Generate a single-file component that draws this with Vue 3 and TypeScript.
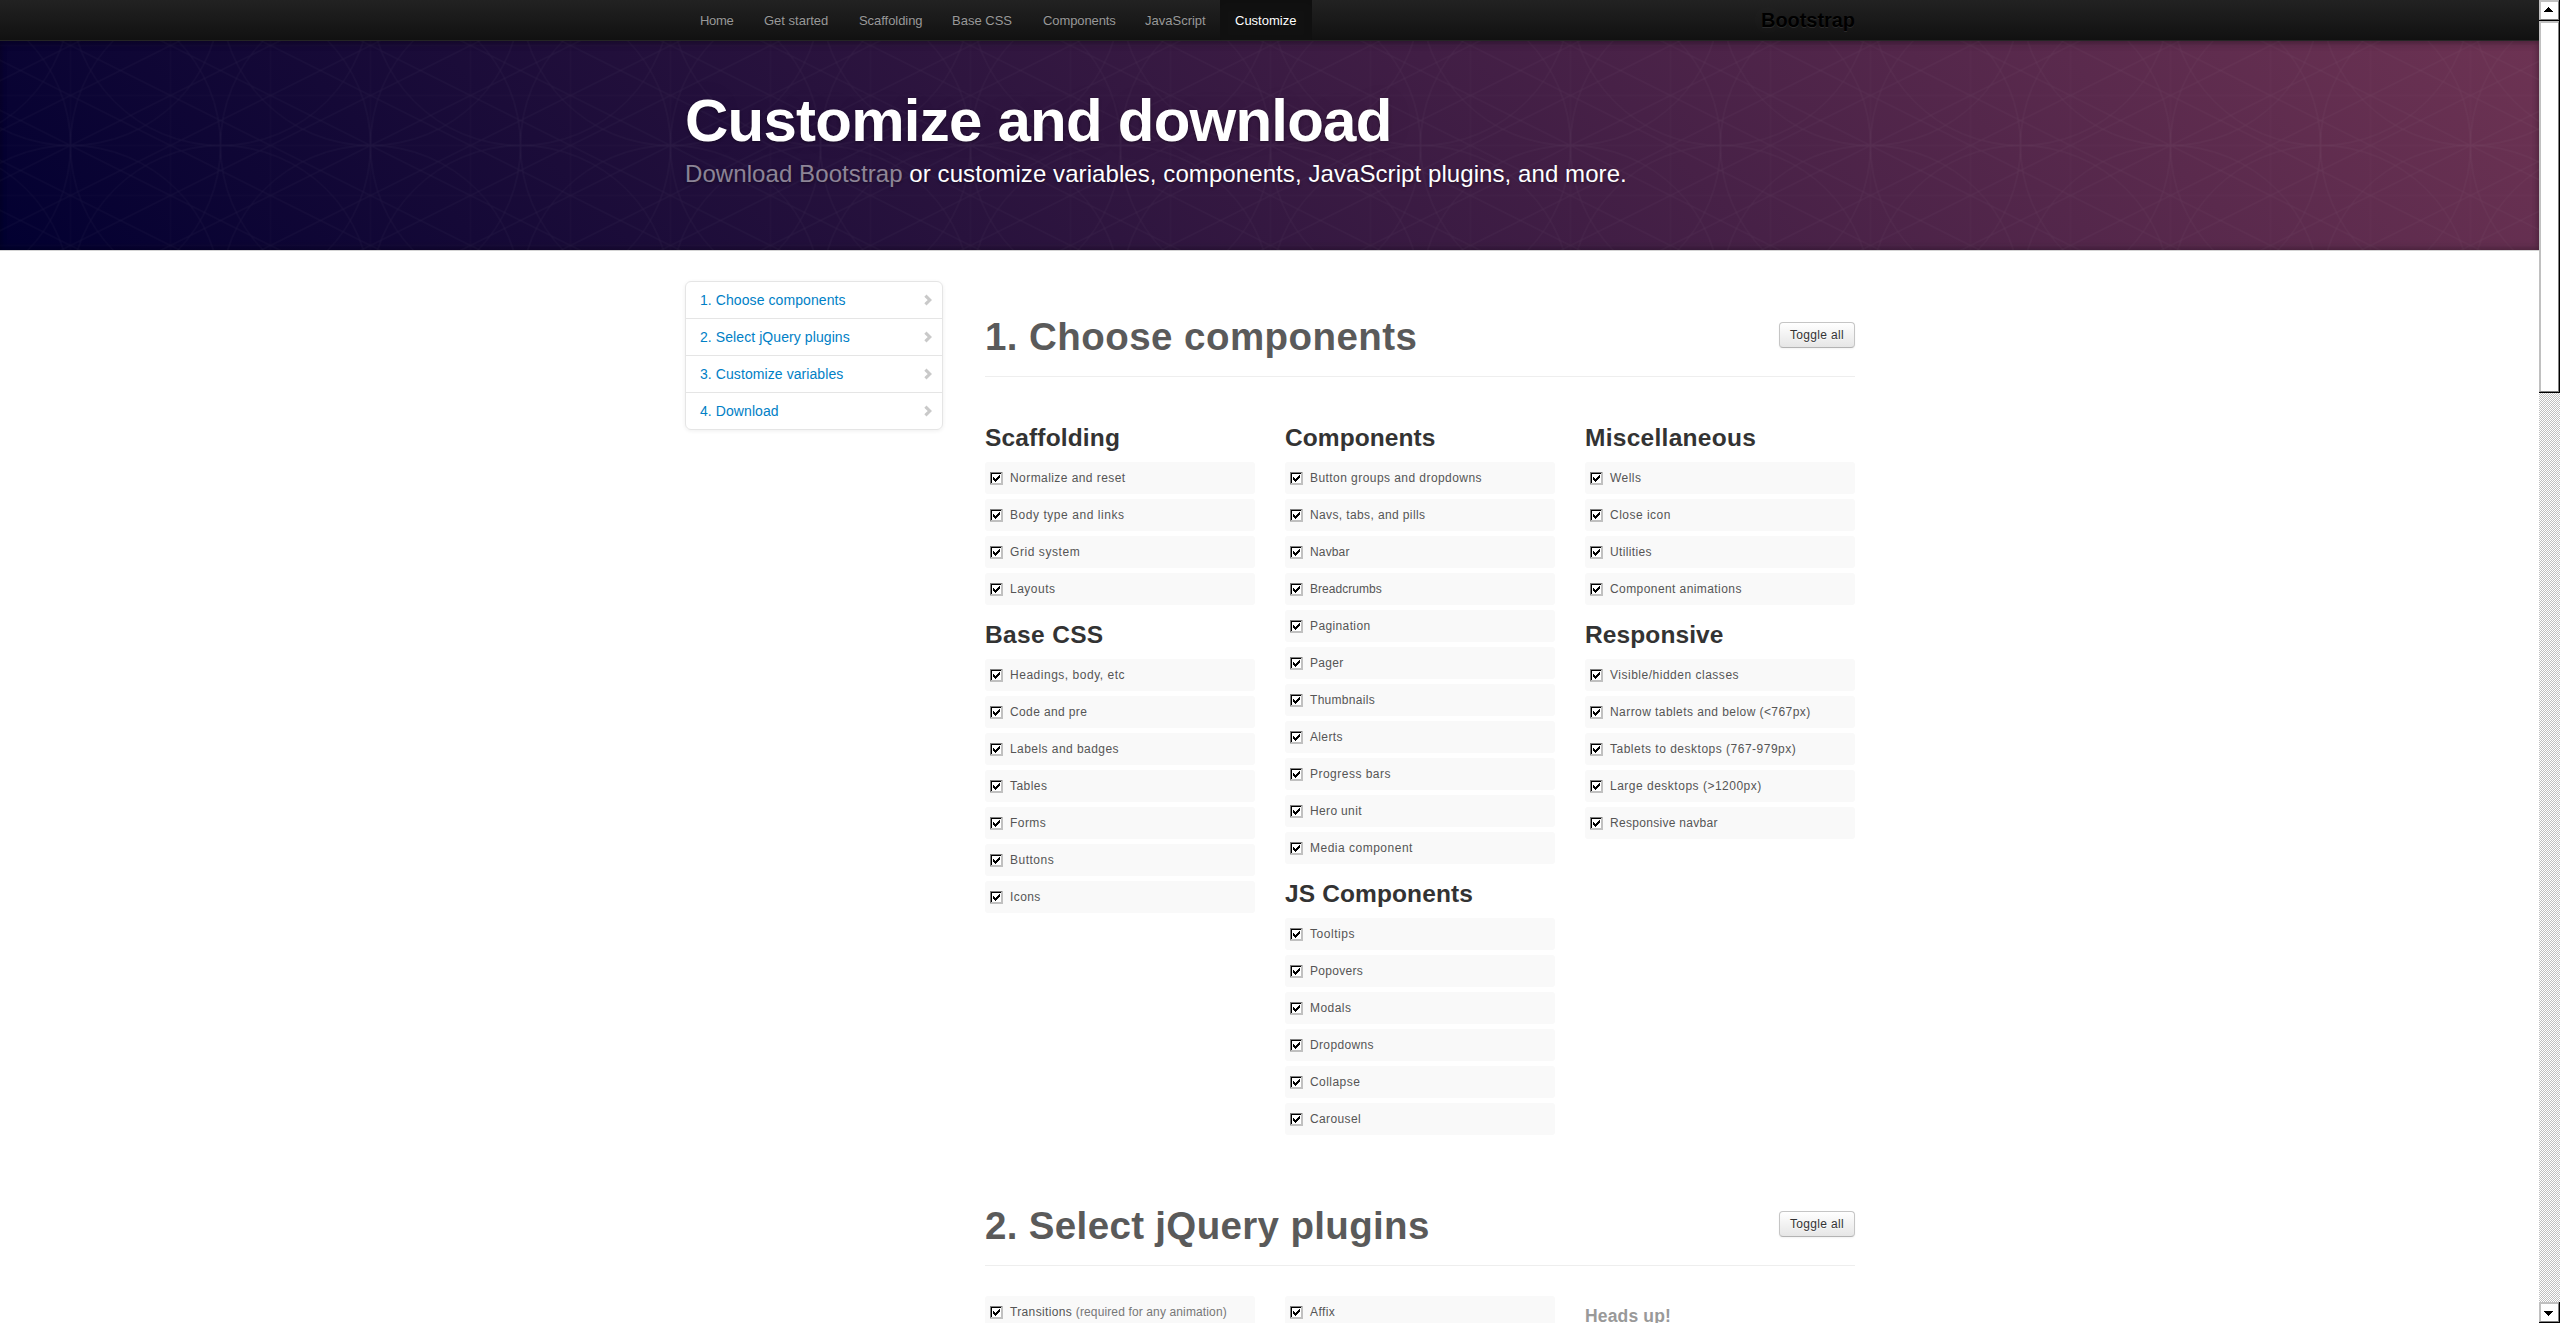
<script setup lang="ts">
interface Item { label: string; ls: number; note?: string }
interface Group { title: string; ls: number; items: Item[] }

const nav: { label: string; w: number; ls: number }[] = [
  { label: 'Home', w: 64, ls: -0.3 },
  { label: 'Get started', w: 95, ls: 0 },
  { label: 'Scaffolding', w: 93, ls: -0.05 },
  { label: 'Base CSS', w: 91, ls: 0 },
  { label: 'Components', w: 102, ls: -0.1 },
  { label: 'JavaScript', w: 90, ls: 0 },
  { label: 'Customize', w: 92, ls: 0 },
]

const side = ['1. Choose components', '2. Select jQuery plugins', '3. Customize variables', '4. Download']

const list = (...pairs: [string, number][]): Item[] => pairs.map(([label, ls]) => ({ label, ls }))

const columns: Group[][] = [
  [
    {
      title: 'Scaffolding',
      ls: 0.15,
      items: list(['Normalize and reset', 0.43], ['Body type and links', 0.55], ['Grid system', 0.57], ['Layouts', 0.5]),
    },
    {
      title: 'Base CSS',
      ls: 0.35,
      items: list(['Headings, body, etc', 0.52], ['Code and pre', 0.38], ['Labels and badges', 0.45], ['Tables', 0.45], ['Forms', 0.45], ['Buttons', 0.5], ['Icons', 0.4]),
    },
  ],
  [
    {
      title: 'Components',
      ls: 0.08,
      items: list(
        ['Button groups and dropdowns', 0.44],
        ['Navs, tabs, and pills', 0.38],
        ['Navbar', 0.15],
        ['Breadcrumbs', 0.03],
        ['Pagination', 0.38],
        ['Pager', 0.3],
        ['Thumbnails', 0.3],
        ['Alerts', 0.35],
        ['Progress bars', 0.48],
        ['Hero unit', 0.35],
        ['Media component', 0.5],
      ),
    },
    {
      title: 'JS Components',
      ls: 0.12,
      items: list(['Tooltips', 0.55], ['Popovers', 0.3], ['Modals', 0.45], ['Dropdowns', 0.35], ['Collapse', 0.45], ['Carousel', 0.38]),
    },
  ],
  [
    {
      title: 'Miscellaneous',
      ls: 0.28,
      items: list(['Wells', 0.45], ['Close icon', 0.48], ['Utilities', 0.35], ['Component animations', 0.42]),
    },
    {
      title: 'Responsive',
      ls: 0.1,
      items: list(['Visible/hidden classes', 0.51], ['Narrow tablets and below (<767px)', 0.43], ['Tablets to desktops (767-979px)', 0.5], ['Large desktops (>1200px)', 0.5], ['Responsive navbar', 0.3]),
    },
  ],
]

const plugins: Item[][] = [
  [{ label: 'Transitions', ls: 0.35, note: '(required for any animation)' }],
  [{ label: 'Affix', ls: 0.4 }],
]

const circles: [number, number][] = []
for (const x of [-150, 0, 150, 300, 450]) for (const y of [-150, 0, 150, 300]) circles.push([x, y])
</script>

<template>
  <div class="screen">
    <div class="page">
      <nav class="navbar">
        <div class="container bar">
          <a
            v-for="n in nav"
            :key="n.label"
            :class="['nav-link', { active: n.label === 'Customize' }]"
            :style="{ width: n.w + 'px', letterSpacing: n.ls + 'px' }"
          >{{ n.label }}</a>
          <a class="brand">Bootstrap</a>
        </div>
      </nav>

      <header class="masthead">
        <svg class="pattern" width="100%" height="100%">
          <defs>
            <pattern id="geo" width="300" height="150" patternUnits="userSpaceOnUse" x="70.5" y="104.5">
              <g fill="none" stroke="#fff" stroke-width="1">
                <circle v-for="(c, i) in circles" :key="i" :cx="c[0]" :cy="c[1]" r="150" />
                <path d="M0 0V150M100 0V150M200 0V150M300 0V150M0 0H300M0 50H300M0 100H300M0 150H300" stroke-opacity=".55" />
                <path d="M0 0L300 150M0 50L200 150M0 100L100 150M100 0L300 100M200 0L300 50M0 150L300 0M0 100L200 0M0 50L100 0M100 150L300 50M200 150L300 100" />
              </g>
            </pattern>
          </defs>
          <rect width="100%" height="100%" fill="url(#geo)" />
        </svg>
        <div class="container hero">
          <h1>Customize and download</h1>
          <p><a>Download Bootstrap</a> or customize variables, components, JavaScript plugins, and more.</p>
        </div>
      </header>

      <div class="container body">
        <ul class="sidenav">
          <li v-for="s in side" :key="s">
            <span>{{ s }}</span>
            <svg width="8" height="12" viewBox="0 0 8 12"><path d="M1.4 1.6L5.8 6L1.4 10.4" fill="none" stroke="#c9c9c9" stroke-width="3.1" /></svg>
          </li>
        </ul>

        <main class="content">
          <section class="first">
            <div class="page-header">
              <h1 class="choose">1. Choose components</h1>
              <button class="btn">Toggle all</button>
            </div>
            <div class="cols">
              <div v-for="(col, ci) in columns" :key="ci" class="col">
                <template v-for="g in col" :key="g.title">
                  <h3 :style="{ letterSpacing: g.ls + 'px' }">{{ g.title }}</h3>
                  <label v-for="it in g.items" :key="it.label" class="row">
                    <svg class="check" width="13" height="13" viewBox="0 0 13 13" shape-rendering="crispEdges">
                      <rect width="13" height="13" fill="#c0c0c0" />
                      <path d="M0 0H12V1H1V12H0Z" fill="#808080" />
                      <path d="M1 1H11V2H2V11H1Z" fill="#000" />
                      <rect x="2" y="2" width="9" height="9" fill="#fff" />
                      <path d="M3 5h1v1h1v1h1v-1h1v-1h1v-1h1v-1h1v3h-1v1h-1v1h-1v1h-1v1h-1v-1h-1v-1h-1z" fill="#000" />
                    </svg>
                    <span :style="{ letterSpacing: it.ls + 'px' }">{{ it.label }}</span>
                  </label>
                </template>
              </div>
            </div>
          </section>

          <section>
            <div class="page-header">
              <h1>2. Select jQuery plugins</h1>
              <button class="btn">Toggle all</button>
            </div>
            <div class="cols second">
              <div v-for="(col, ci) in plugins" :key="ci" class="col">
                <label v-for="it in col" :key="it.label" class="row">
                  <svg class="check" width="13" height="13" viewBox="0 0 13 13" shape-rendering="crispEdges">
                    <rect width="13" height="13" fill="#c0c0c0" />
                    <path d="M0 0H12V1H1V12H0Z" fill="#808080" />
                    <path d="M1 1H11V2H2V11H1Z" fill="#000" />
                    <rect x="2" y="2" width="9" height="9" fill="#fff" />
                    <path d="M3 5h1v1h1v1h1v-1h1v-1h1v-1h1v-1h1v3h-1v1h-1v1h-1v1h-1v1h-1v-1h-1v-1h-1z" fill="#000" />
                  </svg>
                  <span :style="{ letterSpacing: it.ls + 'px' }">{{ it.label }} <small v-if="it.note">{{ it.note }}</small></span>
                </label>
              </div>
              <div class="col"><h4>Heads up!</h4></div>
            </div>
          </section>
        </main>
      </div>
    </div>

    <aside class="scrollbar">
      <div class="sb-box sb-btn">
        <svg width="9" height="5" viewBox="0 0 9 5" shape-rendering="crispEdges"><path d="M4 0h1v1h1v1h1v1h1v1h1v1H0v-1h1v-1h1v-1h1v-1h1z" /></svg>
      </div>
      <div class="sb-box sb-thumb"></div>
      <div class="sb-track"></div>
      <div class="sb-box sb-btn">
        <svg width="9" height="5" viewBox="0 0 9 5" shape-rendering="crispEdges"><path d="M0 0h9v1h-1v1h-1v1h-1v1h-1v1h-1v-1h-1v-1h-1v-1h-1v-1h-1z" /></svg>
      </div>
    </aside>
  </div>
</template>

<style>
html, body { height: 100%; overflow: hidden; background: #fff; }
</style>

<style scoped>
.screen {
  display: flex;
  width: 2560px;
  height: 1323px;
  overflow: hidden;
  font: 14px/20px "Liberation Sans", Arial, sans-serif;
  color: #5a5a5a;
}
h1, h3, h4, p, ul { margin: 0; padding: 0; }
.page { width: 2539px; height: 1323px; overflow: hidden; background: #fff; }
.container { width: 1170px; margin-left: 685px; }

.navbar {
  position: relative;
  z-index: 2;
  box-sizing: border-box;
  height: 41px;
  background: linear-gradient(#222, #111);
  border-bottom: 1px solid #252525;
  box-shadow: 0 1px 10px rgba(0, 0, 0, .1);
}
.bar { display: flex; height: 40px; }
.nav-link {
  box-sizing: border-box;
  height: 40px;
  padding: 11px 0 9px 15px;
  font-size: 13px;
  line-height: 20px;
  color: #999;
  white-space: nowrap;
  text-shadow: 0 -1px 0 rgba(0, 0, 0, .25);
}
.nav-link.active { color: #fff; background: #111; box-shadow: inset 0 3px 8px rgba(0, 0, 0, .125); }
.brand {
  margin-left: auto;
  padding-top: 10px;
  font-size: 20px;
  font-weight: bold;
  letter-spacing: -.05px;
  color: #000;
  text-shadow: 0 1px 0 rgba(255, 255, 255, .1), 0 0 30px rgba(255, 255, 255, .125);
}

.masthead {
  position: relative;
  height: 209px;
  background: linear-gradient(45deg, #020031 0%, #6d3353 100%);
  box-shadow: inset 0 3px 7px rgba(0, 0, 0, .2), inset 0 -3px 7px rgba(0, 0, 0, .2), 0 1px 0 #d4d4d4;
  color: #fff;
}
.pattern { position: absolute; inset: 0; opacity: .048; }
.hero { position: relative; padding-top: 50px; text-shadow: 0 1px 3px rgba(0, 0, 0, .4), 0 0 30px rgba(0, 0, 0, .075); }
.hero h1 { font-size: 60px; line-height: 60px; letter-spacing: -.76px; white-space: nowrap; }
.hero p { margin-top: 8px; font-size: 24px; line-height: 30px; letter-spacing: .08px; white-space: nowrap; }
.hero a { color: rgba(255, 255, 255, .5); }

.body { display: flex; align-items: flex-start; }
.sidenav {
  box-sizing: border-box;
  width: 258px;
  margin: 31px 42px 0 0;
  list-style: none;
  border: 1px solid #e5e5e5;
  border-radius: 6px;
  box-shadow: 0 1px 4px rgba(0, 0, 0, .065);
}
.sidenav li {
  display: flex;
  align-items: center;
  justify-content: space-between;
  height: 36px;
  padding: 0 10px 0 14px;
  letter-spacing: .08px;
  color: #0080c6;
}
.sidenav li + li { border-top: 1px solid #e5e5e5; }

.content { width: 870px; }
.first { height: 889px; }
.page-header {
  display: flex;
  justify-content: space-between;
  height: 59px;
  padding-top: 67px;
  border-bottom: 1px solid #eee;
}
.page-header h1 { font-size: 38.5px; line-height: 40px; letter-spacing: .34px; white-space: nowrap; }
.page-header .choose { letter-spacing: .44px; }
.btn {
  box-sizing: border-box;
  width: 76px;
  height: 26px;
  margin-top: 5px;
  padding: 0;
  font: 12px/20px "Liberation Sans", Arial, sans-serif;
  letter-spacing: .35px;
  color: #333;
  text-shadow: 0 1px 1px rgba(255, 255, 255, .75);
  background: linear-gradient(#fff, #e6e6e6);
  border: 1px solid #c5c5c5;
  border-bottom-color: #b3b3b3;
  border-radius: 4px;
  box-shadow: inset 0 1px 0 rgba(255, 255, 255, .2), 0 1px 2px rgba(0, 0, 0, .05);
}

.cols { display: flex; gap: 30px; padding-top: 41px; }
.cols.second { padding-top: 30px; }
.col { width: 270px; }
h3 { margin-bottom: 4px; font-size: 24.5px; line-height: 40px; color: #333; white-space: nowrap; }
.row + h3 { margin-top: 10px; }
.row {
  display: flex;
  box-sizing: border-box;
  height: 32px;
  padding: 6px 5px;
  font-size: 12px;
  line-height: 20px;
  color: #555;
  white-space: nowrap;
  background: #f9f9f9;
  border-radius: 3px;
}
.row + .row { margin-top: 5px; }
.check { flex: none; margin: 4px 7px 0 0; }
small { font-size: 12px; letter-spacing: .13px; color: #777; }
h4 { padding-top: 10px; font-size: 17.5px; line-height: 20px; letter-spacing: .15px; color: #999; }

.scrollbar { display: flex; flex-direction: column; width: 21px; height: 1323px; }
.sb-box {
  box-sizing: border-box;
  background: #fff;
  border: solid #c0c0c0;
  border-width: 2px 1px 1px 2px;
  border-right-color: #808080;
  border-bottom-color: #808080;
  width: 20px;
  margin: 0 1px 1px 0;
  box-shadow: 1px 1px 0 #000, 1px 0 0 #000, 0 1px 0 #000;
}
.sb-btn { flex: none; height: 20px; display: flex; align-items: flex-start; padding: 5px 0 0 3px; }
.sb-btn:last-child { padding-top: 7px; }
.sb-thumb { flex: none; height: 371px; }
.sb-track { flex: 1; background: conic-gradient(#c0c0c0 25%, #fff 0 50%, #c0c0c0 0 75%, #fff 0) 0 0 / 2px 2px; }
</style>
